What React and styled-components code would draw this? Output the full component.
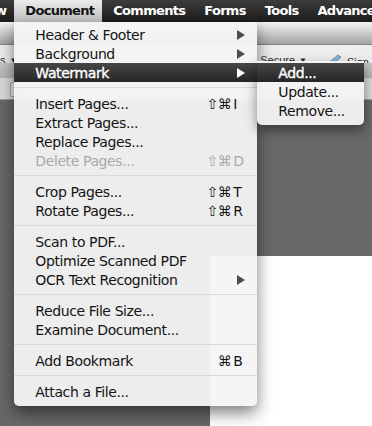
import React from 'react';
import styled, { createGlobalStyle } from 'styled-components';

const GlobalStyle = createGlobalStyle`
  html, body {
    margin: 0;
    padding: 0;
    height: 100%;
    overflow: hidden;
  }
  body {
    font-family: "DejaVu Sans", "Noto Sans", sans-serif;
    background: #686868;
  }
  #root {
    height: 100%;
  }
`;

const Screen = styled.div`
  height: 100vh;
  display: flex;
  flex-direction: column;
  overflow: hidden;
`;

const MenuBar = styled.div`
  display: flex;
  flex-shrink: 0;
  height: 22px;
  background: linear-gradient(#3c3c3c, #1c1c1c);
  position: relative;
  z-index: 3;
`;

const BarItem = styled.div`
  position: relative;
  padding: 0 8px 0 11px;
  line-height: 22px;
  font-size: 13px;
  font-weight: bold;
  letter-spacing: -0.7px;
  white-space: nowrap;
  color: ${(p) => (p.$active ? '#141414' : '#ffffff')};
  background: ${(p) => (p.$active ? 'linear-gradient(#ebebeb, #c0c0c0)' : 'none')};

  &:first-child {
    margin-left: -37px;
  }
`;

const TitleBar = styled.div`
  flex-shrink: 0;
  height: 22px;
  background: linear-gradient(#f3f3f3, #d0d0d0 45%, #a4a4a4);
  border-bottom: 1px solid #858585;
`;

const ToolRow = styled.div`
  flex-shrink: 0;
  height: 18px;
  box-sizing: border-box;
  padding: 9px 3px 0 0;
  display: flex;
  align-items: flex-start;
  overflow: hidden;
  background: #ededed;
  font-family: "Liberation Sans", Arial, sans-serif;
  font-size: 11px;
  line-height: 13px;
  color: #2a2a2a;
`;

const Tool = styled.div`
  display: flex;
  align-items: center;
  gap: 4px;
  margin-left: ${(p) => p.$gap || 0}px;
  white-space: nowrap;
`;

const Spacer = styled.div`
  flex: 1;
`;

const Caret = styled.span`
  font-size: 8px;
`;

const FilterRow = styled.div`
  flex-shrink: 0;
  height: 15px;
  background: linear-gradient(#c6c6c6, #b3b3b3);
`;

const TabRow = styled.div`
  flex-shrink: 0;
  height: 22px;
  box-sizing: border-box;
  padding: 4px 0 0 10px;
  background: #d9d9d9;
  border-bottom: 1px solid #9c9c9c;
`;

const Handle = styled.div`
  width: 8px;
  height: 15px;
  box-sizing: border-box;
  border: 1px solid #a9a9a9;
  border-radius: 2px;
  background: #e8e8e8;
`;

const Workspace = styled.div`
  flex: 1;
  background: #686868;
  display: flex;
  flex-direction: column;
`;

const Page = styled.div`
  flex: 1;
  margin: 156px 0 0 210px;
  background: #ffffff;
`;

const Dropdown = styled.div`
  position: absolute;
  top: 100%;
  left: 0;
  width: 243px;
  box-sizing: border-box;
  padding: 3px 0 5px;
  background: rgba(244, 244, 244, 0.95);
  border-radius: 0 0 5px 5px;
  box-shadow: 0 7px 16px rgba(0, 0, 0, 0.5);
  font-family: "DejaVu Sans", "Noto Sans", sans-serif;
  font-weight: normal;
  font-size: 14px;
  letter-spacing: -0.4px;
  color: #141414;
`;

const SubDropdown = styled(Dropdown)`
  top: -2px;
  left: 100%;
  width: 107px;
  padding: 2px 0 5px;
  box-shadow: 0 5px 12px rgba(0, 0, 0, 0.45);
  color: #141414;
`;

const Row = styled.div`
  position: relative;
  display: flex;
  align-items: center;
  height: 19px;
  padding: 0 12px 0 21px;
  white-space: nowrap;
  color: ${(p) => (p.$active ? '#ffffff' : p.$disabled ? '#a9a9a9' : 'inherit')};
  background: ${(p) => (p.$active ? 'linear-gradient(#474747, #262626)' : 'none')};
  -webkit-text-stroke: ${(p) => (p.$active ? '0.35px #ffffff' : '0')};
`;

const Shortcut = styled.span`
  display: flex;
  margin-left: auto;
`;

const Mods = styled.span`
  margin-right: 2px;
`;

const Key = styled.span`
  width: 12px;
`;

const Arrow = styled.svg`
  margin-left: auto;
  width: 8px;
  height: 10px;
  fill: ${(p) => (p.$active ? '#ffffff' : '#4d4d4d')};
`;

const Separator = styled.div`
  height: 1px;
  margin: 5px 0 6px;
  background: #d9d9d9;
`;

const MENU = [
  { label: 'Header & Footer', sub: true },
  { label: 'Background', sub: true },
  { label: 'Watermark', sub: true, active: true },
  null,
  { label: 'Insert Pages...', mods: '⇧⌘', key: 'I' },
  { label: 'Extract Pages...' },
  { label: 'Replace Pages...' },
  { label: 'Delete Pages...', mods: '⇧⌘', key: 'D', disabled: true },
  null,
  { label: 'Crop Pages...', mods: '⇧⌘', key: 'T' },
  { label: 'Rotate Pages...', mods: '⇧⌘', key: 'R' },
  null,
  { label: 'Scan to PDF...' },
  { label: 'Optimize Scanned PDF' },
  { label: 'OCR Text Recognition', sub: true },
  null,
  { label: 'Reduce File Size...' },
  { label: 'Examine Document...' },
  null,
  { label: 'Add Bookmark', mods: '⌘', key: 'B' },
  null,
  { label: 'Attach a File...' },
];

const WATERMARK = ['Add...', 'Update...', 'Remove...'];

function PenIcon() {
  return (
    <svg width="20" height="16" viewBox="0 0 20 16">
      <defs>
        <linearGradient id="pen" x1="0" y1="0" x2="1" y2="1">
          <stop offset="0" stopColor="#bfe0f5" />
          <stop offset="1" stopColor="#3f86c2" />
        </linearGradient>
      </defs>
      <path d="M2 15 L4 10 L15 1 L18 3 L7 13 Z" fill="url(#pen)" stroke="#2f5f8a" strokeWidth="0.6" />
      <path d="M2 15 L4 10 L7 13 Z" fill="#d8d2c0" />
    </svg>
  );
}

function MenuRow({ item, children }) {
  return (
    <Row $active={item.active} $disabled={item.disabled}>
      {item.label}
      {item.key && (
        <Shortcut>
          <Mods>{item.mods}</Mods>
          <Key>{item.key}</Key>
        </Shortcut>
      )}
      {item.sub && (
        <Arrow $active={item.active} viewBox="0 0 8 10">
          <polygon points="0,0 8,5 0,10" />
        </Arrow>
      )}
      {children}
    </Row>
  );
}

export default function App() {
  return (
    <Screen>
      <GlobalStyle />
      <MenuBar>
        <BarItem>View</BarItem>
        <BarItem $active>
          Document
          <Dropdown>
            {MENU.map((item, i) =>
              item ? (
                <MenuRow key={i} item={item}>
                  {item.active && (
                    <SubDropdown>
                      {WATERMARK.map((label, j) => (
                        <Row key={label} $active={j === 0}>
                          {label}
                        </Row>
                      ))}
                    </SubDropdown>
                  )}
                </MenuRow>
              ) : (
                <Separator key={i} />
              )
            )}
          </Dropdown>
        </BarItem>
        <BarItem>Comments</BarItem>
        <BarItem>Forms</BarItem>
        <BarItem>Tools</BarItem>
        <BarItem>Advanced</BarItem>
      </MenuBar>
      <TitleBar />
      <ToolRow>
        <Tool>
          s<Caret>▼</Caret>
        </Tool>
        <Spacer />
        <Tool>
          Secure<Caret>▼</Caret>
        </Tool>
        <Tool $gap={16}>
          <PenIcon />
          Sign
        </Tool>
      </ToolRow>
      <FilterRow />
      <TabRow>
        <Handle />
      </TabRow>
      <Workspace>
        <Page />
      </Workspace>
    </Screen>
  );
}
